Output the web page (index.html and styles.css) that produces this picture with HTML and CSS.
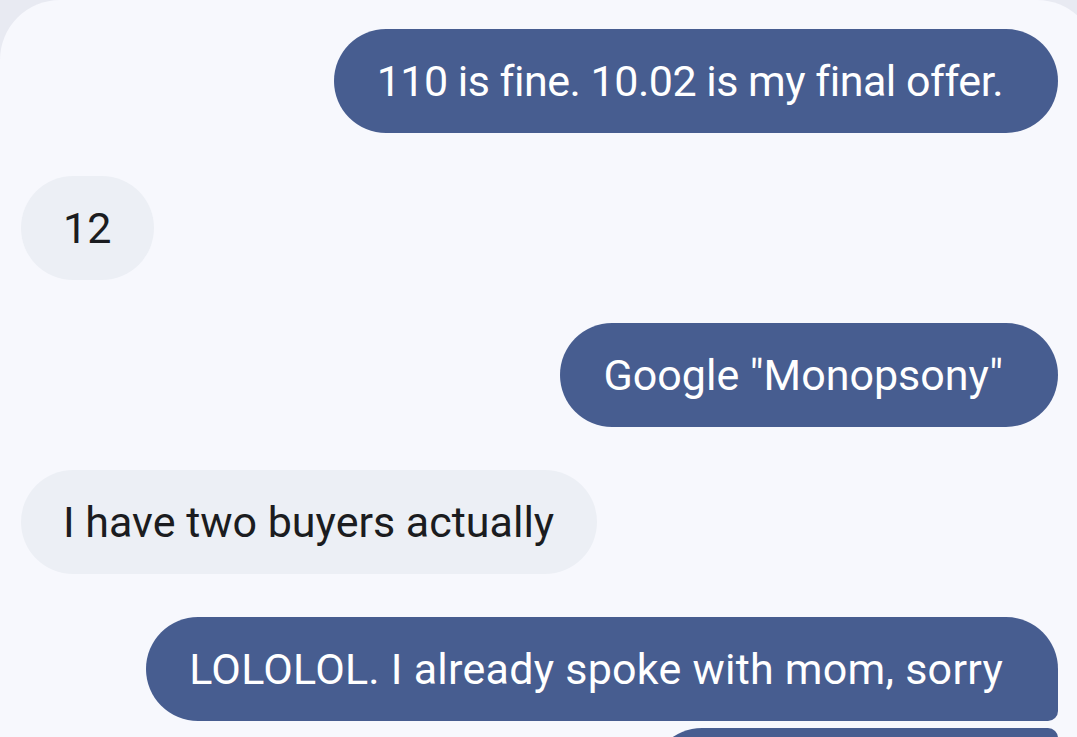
FILE: index.html
```html
<!DOCTYPE html>
<html>
<head>
<meta charset="utf-8">
<link rel="stylesheet" href="styles.css">
</head>
<body>
<div class="card">
  <div class="thread">
    <div class="row out"><div class="bubble sent tight">110 is fine. 10.02 is my final offer.</div></div>
    <div class="row in"><div class="bubble recv">12</div></div>
    <div class="row out"><div class="bubble sent">Google "Monopsony"</div></div>
    <div class="row in"><div class="bubble recv">I have two buyers actually</div></div>
    <div class="group">
      <div class="row out"><div class="bubble sent first">LOLOLOL. I already spoke with mom, sorry</div></div>
      <div class="row out"><div class="bubble sent next"></div></div>
    </div>
  </div>
</div>
</body>
</html>
```
FILE: styles.css
```css
html, body {
  margin: 0;
  padding: 0;
  background: #e8eaf2;
  height: 100%;
  overflow: hidden;
}
.card {
  background: #f7f8fd;
  border-radius: 60px 60px 0 0;
  height: 100%;
  margin-right: -20px;
  padding-right: 20px;
}
.thread {
  display: flex;
  flex-direction: column;
  gap: 43px;
  padding: 29px 19px 0 21px;
  font-family: Roboto, "Noto Sans", sans-serif;
  font-size: 43px;
}
.group {
  display: flex;
  flex-direction: column;
  gap: 7px;
}
.row {
  display: flex;
}
.row.out { justify-content: flex-end; }
.row.in { justify-content: flex-start; }
.bubble {
  height: 104px;
  box-sizing: border-box;
  display: flex;
  align-items: center;
  padding: 0 43px;
  border-radius: 52px;
  white-space: nowrap;
}
.sent {
  background: #475d90;
  color: #ffffff;
  padding: 0 55px 0 43px;
}
.sent.tight { letter-spacing: -0.5px; }
.recv {
  background: #eceff5;
  color: #1b1c20;
  padding: 0 43px 0 42px;
}
.sent.first {
  border-bottom-right-radius: 10px;
  letter-spacing: 0.25px;
}
.sent.next {
  border-top-right-radius: 10px;
  width: 408px;
}
```
